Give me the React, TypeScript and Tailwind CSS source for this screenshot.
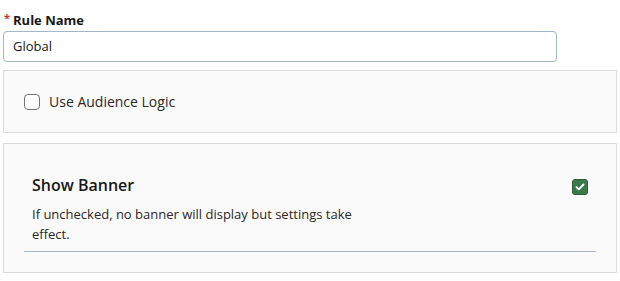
import React from "react";

export default function App() {
  return (
    <div className="min-h-screen bg-white px-[3px] pt-[11px] text-[#181818]" style={{ fontFamily: '"Open Sans", "Noto Sans", sans-serif' }}>
      <label className="flex items-center text-[13px] font-bold leading-[18px] pl-[1px]">
        <span className="text-[#c23934] text-[11px] leading-none mr-[3px] -mt-[5px]">*</span>
        Rule Name
      </label>
      <div className="mt-[2px] w-[554px] h-[31px] border border-[#a4b6ca] rounded-[4px] bg-white flex items-center px-[9px] text-[13px] text-[#181818]">
        Global
      </div>

      <div className="mt-[8px] w-[614px] h-[63px] border border-[#dddbda] bg-[#fafafa] flex items-center px-[20px]">
        <div className="w-[16px] h-[16px] rounded-[4px] border border-[#747474] bg-white" />
        <span className="ml-[9px] text-[14px] text-[#2b2826]">Use Audience Logic</span>
      </div>

      <div className="mt-[10px] w-[614px] h-[130px] border border-[#dddbda] bg-[#fafafa] px-[20px] pt-[30px]">
        <div className="flex items-start justify-between px-[8px]">
          <div>
            <div className="text-[16px] font-semibold leading-[22px] text-[#181818]">Show Banner</div>
            <p className="mt-[8px] w-[330px] text-[13px] leading-[20px] text-[#2b2826]">
              If unchecked, no banner will display but settings take effect.
            </p>
          </div>
          <div className="mt-[5px] w-[16px] h-[16px] rounded-[3px] border border-[#2e5e3a] bg-[#3b7a4c] flex items-center justify-center">
            <svg width="10" height="8" viewBox="0 0 10 8" fill="none">
              <path d="M1.5 4.2 L3.8 6.3 L8.5 1.5" stroke="white" strokeWidth="1.8" strokeLinecap="round" strokeLinejoin="round" />
            </svg>
          </div>
        </div>
        <div className="mt-[7px] h-px bg-[#a8b8cc]" />
      </div>
    </div>
  );
}
